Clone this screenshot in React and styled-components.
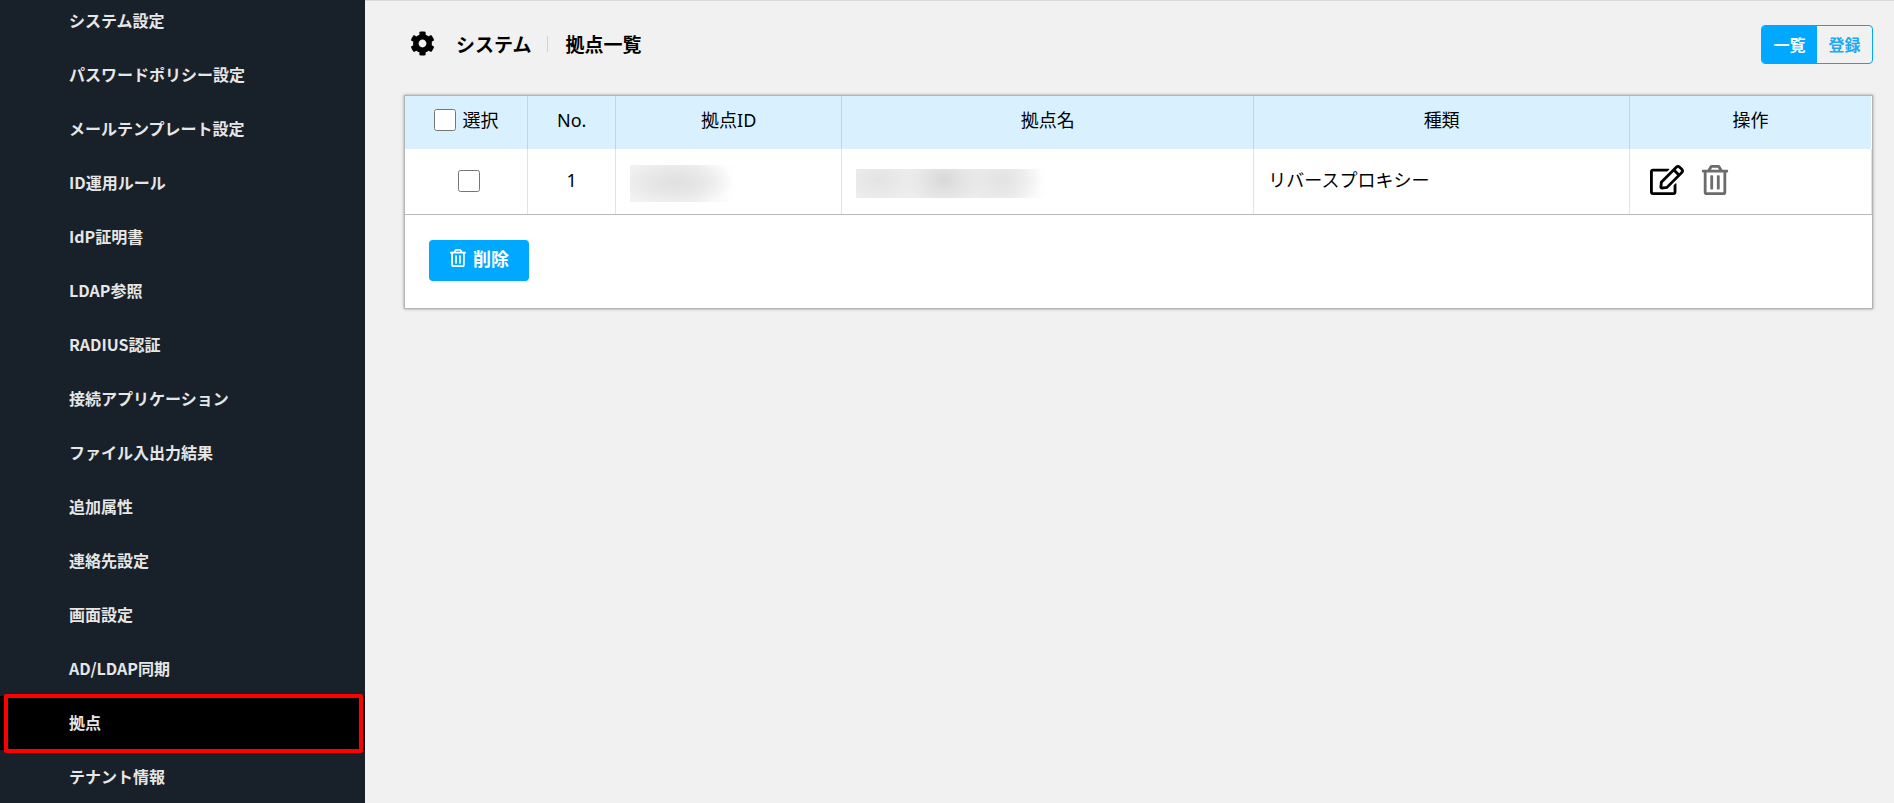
import React, { useState } from 'react';
import styled, { createGlobalStyle } from 'styled-components';
import { FaCog, FaRegEdit, FaRegTrashAlt } from 'react-icons/fa';

const GlobalStyle = createGlobalStyle`
  * {
    box-sizing: border-box;
  }
  body {
    margin: 0;
    background: #f1f1f1;
    color: #000;
    font-family: 'Noto Sans CJK JP', sans-serif;
    font-size: 16px;
  }
`;

const Layout = styled.div`
  display: flex;
  height: 100vh;
  overflow: hidden;
`;

// sidebar
const Sidebar = styled.nav`
  flex: 0 0 365px;
  overflow: hidden;
  background: #182029;
`;

// the menu is scrolled a little past its first entry
const Menu = styled.ul`
  margin: -6px 0 0;
  padding: 0;
  list-style: none;
`;

const MenuItem = styled.li`
  position: relative;
  background: ${(props) => (props.$active ? '#000' : 'transparent')};

  &::after {
    content: '';
    display: ${(props) => (props.$active ? 'block' : 'none')};
    position: absolute;
    z-index: 1;
    top: -2px;
    right: 2px;
    bottom: -3px;
    left: 4px;
    border: 4px solid #f00;
    border-radius: 2px;
    pointer-events: none;
  }
`;

const MenuLink = styled.a`
  display: flex;
  align-items: center;
  height: 54px;
  padding: 0 0 2px 69px;
  color: #e6e6e6;
  font-weight: 700;
  text-decoration: none;
`;

// main area
const Main = styled.main`
  flex: 1;
  min-width: 0;
  padding: 24px 21px 24px 39px;
  border-top: 1px solid #d9d9d9;
`;

const Header = styled.header`
  display: flex;
  align-items: center;
  justify-content: space-between;
  margin-bottom: 31px;
`;

const Breadcrumb = styled.div`
  display: flex;
  align-items: center;
  padding: 0 0 2px 6px;
  font-size: 19px;
  font-weight: 700;
  line-height: 24px;

  svg {
    margin-right: 21px;
  }
`;

const Title = styled.h1`
  margin: 0 0 0 16px;
  padding-left: 18px;
  font-size: 19px;
  line-height: 24px;
  background: linear-gradient(#d4d4d4, #d4d4d4) left center / 1px 16px no-repeat;
`;

const Switcher = styled.div`
  display: flex;
  height: 39px;
  border: 1px solid #00a8ff;
  border-radius: 4px;
  overflow: hidden;
`;

const SwitchButton = styled.button`
  width: 55px;
  padding: 0 0 2px;
  border: 0;
  background: ${(props) => (props.$active ? '#00a8ff' : 'transparent')};
  color: ${(props) => (props.$active ? '#fff' : '#1ba9f5')};
  font: inherit;
  font-weight: 700;
  cursor: pointer;
`;

const Card = styled.section`
  border: 1px solid #b4b4b4;
  background: #fff;
  box-shadow: 0 0 3px rgba(0, 0, 0, 0.35);
`;

const Table = styled.table`
  width: 100%;
  border-collapse: separate;
  border-spacing: 0;
  border-bottom: 1px solid #b9b9b9;
  table-layout: fixed;
  font-family: 'Noto Sans', 'Noto Sans CJK JP', sans-serif;
  font-size: 18px;
  line-height: 24px;
`;

const Th = styled.th`
  width: ${(props) => props.$width};
  height: 53px;
  padding: 0 0 5px;
  border-right: 1px solid #c1d6e3;
  background: #d9f1fe;
  font-weight: 400;

  &:last-child {
    border-right-color: #fff;
  }
`;

const Td = styled.td`
  height: 65px;
  padding: 0 14px 4px;
  border-right: 1px solid #dbe4ec;
  text-align: ${(props) => (props.$center ? 'center' : 'left')};
`;

const CheckTd = styled(Td)`
  padding-left: 20px;
`;

const CheckLabel = styled.label`
  display: flex;
  align-items: center;
  justify-content: center;
  gap: 7px;
`;

const Checkbox = styled.input`
  width: 22px;
  height: 22px;
  margin: 0;
  vertical-align: middle;
`;

// blurred-out value
const Masked = styled.div`
  width: ${(props) => props.$width};
  height: ${(props) => props.$height};
  margin-top: 8px;
  background: ${(props) => props.$fill};
`;

const Actions = styled.div`
  display: flex;
  align-items: center;
  gap: 16px;
  padding-left: 6px;
`;

const IconButton = styled.button`
  display: flex;
  padding: 0;
  border: 0;
  background: none;
  color: ${(props) => props.$color};
  cursor: pointer;
`;

const CardFooter = styled.div`
  padding: 25px 24px 27px;
`;

const DeleteButton = styled.button`
  display: flex;
  align-items: center;
  justify-content: center;
  gap: 6px;
  width: 100px;
  height: 41px;
  padding: 0 0 5px;
  border: 0;
  border-radius: 4px;
  background: #00a8ff;
  color: #fff;
  font: inherit;
  font-size: 18px;
  font-weight: 700;
  cursor: pointer;
`;

const menu = [
  'システム設定',
  'パスワードポリシー設定',
  'メールテンプレート設定',
  'ID運用ルール',
  'IdP証明書',
  'LDAP参照',
  'RADIUS認証',
  '接続アプリケーション',
  'ファイル入出力結果',
  '追加属性',
  '連絡先設定',
  '画面設定',
  'AD/LDAP同期',
  '拠点',
  'テナント情報',
];

const columns = [
  { label: 'No.', width: '6%' },
  { label: '拠点ID', width: '15.4%' },
  { label: '拠点名', width: '28.1%' },
  { label: '種類', width: '25.6%' },
  { label: '操作', width: '16.5%' },
];

const idFill =
  'radial-gradient(ellipse 58px 24px at 46px 17px, #e0e0e0 0%, rgba(228, 228, 228, 0.8) 45%, rgba(240, 240, 240, 0) 100%), linear-gradient(90deg, #f2f2f2 0%, #f1f1f1 55%, #fff 95%)';
const nameFill =
  'radial-gradient(ellipse 38px 30px at 88px 11px, #d8d8d8 0%, rgba(224, 224, 224, 0.7) 50%, rgba(236, 236, 236, 0) 100%), radial-gradient(ellipse 42px 26px at 22px 11px, #e3e3e3 0%, rgba(236, 236, 236, 0) 100%), radial-gradient(ellipse 40px 26px at 146px 11px, #e3e3e3 0%, rgba(240, 240, 240, 0) 100%), linear-gradient(90deg, #f0f0f0 0%, #ededed 78%, #fff 100%)';

const App = () => {
  const [checked, setChecked] = useState(false);
  const [tab, setTab] = useState('一覧');

  const toggle = () => setChecked(!checked);

  return (
    <Layout>
      <GlobalStyle />
      <Sidebar>
        <Menu>
          {menu.map((item) => (
            <MenuItem key={item} $active={item === '拠点'}>
              <MenuLink href="#">{item}</MenuLink>
            </MenuItem>
          ))}
        </Menu>
      </Sidebar>

      <Main>
        <Header>
          <Breadcrumb>
            <FaCog size={25} />
            <span>システム</span>
            <Title>拠点一覧</Title>
          </Breadcrumb>
          <Switcher>
            {['一覧', '登録'].map((name) => (
              <SwitchButton
                key={name}
                type="button"
                $active={tab === name}
                onClick={() => setTab(name)}
              >
                {name}
              </SwitchButton>
            ))}
          </Switcher>
        </Header>

        <Card>
          <Table>
            <thead>
              <tr>
                <Th $width="8.4%">
                  <CheckLabel>
                    <Checkbox
                      type="checkbox"
                      checked={checked}
                      onChange={toggle}
                    />
                    選択
                  </CheckLabel>
                </Th>
                {columns.map(({ label, width }) => (
                  <Th key={label} $width={width}>
                    {label}
                  </Th>
                ))}
              </tr>
            </thead>
            <tbody>
              <tr>
                <CheckTd $center>
                  <Checkbox
                    type="checkbox"
                    aria-label="選択"
                    checked={checked}
                    onChange={toggle}
                  />
                </CheckTd>
                <Td $center>1</Td>
                <Td>
                  <Masked $width="110px" $height="37px" $fill={idFill} />
                </Td>
                <Td>
                  <Masked $width="190px" $height="29px" $fill={nameFill} />
                </Td>
                <Td>リバースプロキシー</Td>
                <Td>
                  <Actions>
                    <IconButton type="button" aria-label="編集" $color="#000">
                      <FaRegEdit size={34} />
                    </IconButton>
                    <IconButton type="button" aria-label="削除" $color="#6b6b6b">
                      <FaRegTrashAlt size={30} />
                    </IconButton>
                  </Actions>
                </Td>
              </tr>
            </tbody>
          </Table>
          <CardFooter>
            <DeleteButton type="button">
              <FaRegTrashAlt size={18} />
              削除
            </DeleteButton>
          </CardFooter>
        </Card>
      </Main>
    </Layout>
  );
};

export default App;
